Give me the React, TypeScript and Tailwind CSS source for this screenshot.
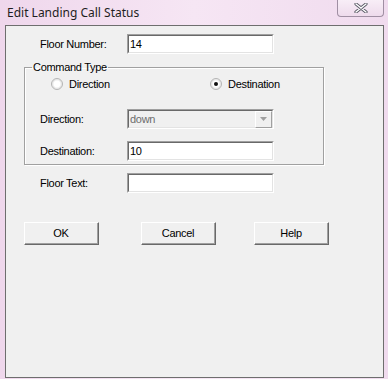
import React from "react";

const font = { fontFamily: '"Liberation Sans", Arial, sans-serif', letterSpacing: "-0.3px" };

function Sunken({ children, disabled, width = 147 }: { children?: React.ReactNode; disabled?: boolean; width?: number }) {
  return (
    <div className="h-[20px] border-t border-l border-t-[#a0a0a0] border-l-[#a0a0a0] border-b border-r border-b-white border-r-white" style={{ width }}>
      <div className={`h-full flex items-center border-t border-l border-t-[#696969] border-l-[#696969] border-b border-r border-b-[#e3e3e3] border-r-[#e3e3e3] ${disabled ? "bg-[#f0f0f0]" : "bg-white"}`}>
        {children}
      </div>
    </div>
  );
}

function TextBox({ value }: { value?: string }) {
  return (
    <Sunken>
      <span className="pl-[1px] text-[11px] leading-none text-black">{value}</span>
    </Sunken>
  );
}

function Combo({ value }: { value: string }) {
  return (
    <Sunken disabled>
      <span className="pl-[1px] flex-1 text-[11px] leading-none text-[#6d6d6d]">{value}</span>
      <div className="h-[17px] w-[17px] flex items-center justify-center bg-[#f0f0f0] border-t border-l border-t-white border-l-white border-b border-r border-b-[#a0a0a0] border-r-[#a0a0a0]">
        <svg width="7" height="4" viewBox="0 0 7 4">
          <path d="M0 0h7L3.5 4z" fill="#a0a0a0" />
        </svg>
      </div>
    </Sunken>
  );
}

function Radio({ checked, label }: { checked?: boolean; label: string }) {
  return (
    <div className="flex items-center gap-[6px]">
      <svg width="12" height="12" viewBox="0 0 12 12">
        <circle cx="6" cy="6" r="5.5" fill="#ececec" stroke="#b4b4b4" />
        <circle cx="6" cy="6" r="4.2" fill="white" stroke="#e0e0e0" strokeWidth="0.8" />
        {checked && <circle cx="6" cy="6" r="2" fill="#111" />}
      </svg>
      <span className="text-[11px] leading-none text-black">{label}</span>
    </div>
  );
}

function Button({ label }: { label: string }) {
  return (
    <div className="w-[75px] h-[23px] border-t border-l border-t-white border-l-white border-b border-r border-b-[#696969] border-r-[#696969]">
      <div className="h-full flex items-center justify-center bg-[#f0f0f0] border-b border-r border-b-[#a0a0a0] border-r-[#a0a0a0] text-[11px] text-black leading-none">
        {label}
      </div>
    </div>
  );
}

function Row({ label, children, pl }: { label: string; children: React.ReactNode; pl: number }) {
  return (
    <div className="flex items-center" style={{ paddingLeft: pl }}>
      <span className="text-[11px] leading-none text-black" style={{ width: 87 }}>{label}</span>
      {children}
    </div>
  );
}

export default function App() {
  return (
    <div className="w-[388px] h-[379px] overflow-hidden bg-gradient-to-r from-[#efd7ec] via-[#f6e6f4] to-[#f0dbee] flex flex-col">
      <div className="h-[25px] flex items-start justify-between shrink-0">
        <span className="mt-[4px] ml-[7px] text-[12px] text-[#1e1e1e]" style={{ fontFamily: '"Noto Sans", "Open Sans", sans-serif' }}>
          Edit Landing Call Status
        </span>
        <div className="mr-[4px] w-[47px] h-[17px] rounded-b-[4px] border border-t-0 border-[#a08fa3] bg-gradient-to-b from-[#f8eef7] to-[#eedbec] flex items-center justify-center">
          <svg width="14" height="10" viewBox="0 0 14 10">
            <path d="M2 1l10 8M12 1L2 9" stroke="#5a5a66" strokeWidth="3.2" strokeLinecap="round" />
            <path d="M2 1l10 8M12 1L2 9" stroke="#ffffff" strokeWidth="1.4" strokeLinecap="round" />
          </svg>
        </div>
      </div>
      <div className="ml-[5px] w-[379px] h-[353px] border border-[#6e6e6e] bg-[#f0f0f0]" style={font}>
        <div className="mt-[8px]">
          <Row label="Floor Number:" pl={34}>
            <TextBox value="14" />
          </Row>
        </div>
        <fieldset className="mt-[7px] ml-[18px] w-[300px] border border-[#a0a0a0] pb-[3px]" style={{ boxShadow: "inset 1px 1px 0 #ffffff, 1px 1px 0 #ffffff" }}>
          <legend className="ml-[7px] px-[1px] text-[11px] leading-[13px] text-black">Command Type</legend>
          <div className="mt-[3px] h-[14px] flex items-center">
            <div className="ml-[26px] w-[159px]">
              <Radio label="Direction" />
            </div>
            <Radio checked label="Destination" />
          </div>
          <div className="mt-[18px]">
            <Row label="Direction:" pl={15}>
              <Combo value="down" />
            </Row>
          </div>
          <div className="mt-[12px]">
            <Row label="Destination:" pl={15}>
              <TextBox value="10" />
            </Row>
          </div>
        </fieldset>
        <div className="mt-[8px]">
          <Row label="Floor Text:" pl={34}>
            <TextBox />
          </Row>
        </div>
        <div className="mt-[29px] ml-[18px] flex">
          <Button label="OK" />
          <div className="ml-[42px]">
            <Button label="Cancel" />
          </div>
          <div className="ml-[38px]">
            <Button label="Help" />
          </div>
        </div>
      </div>
    </div>
  );
}
